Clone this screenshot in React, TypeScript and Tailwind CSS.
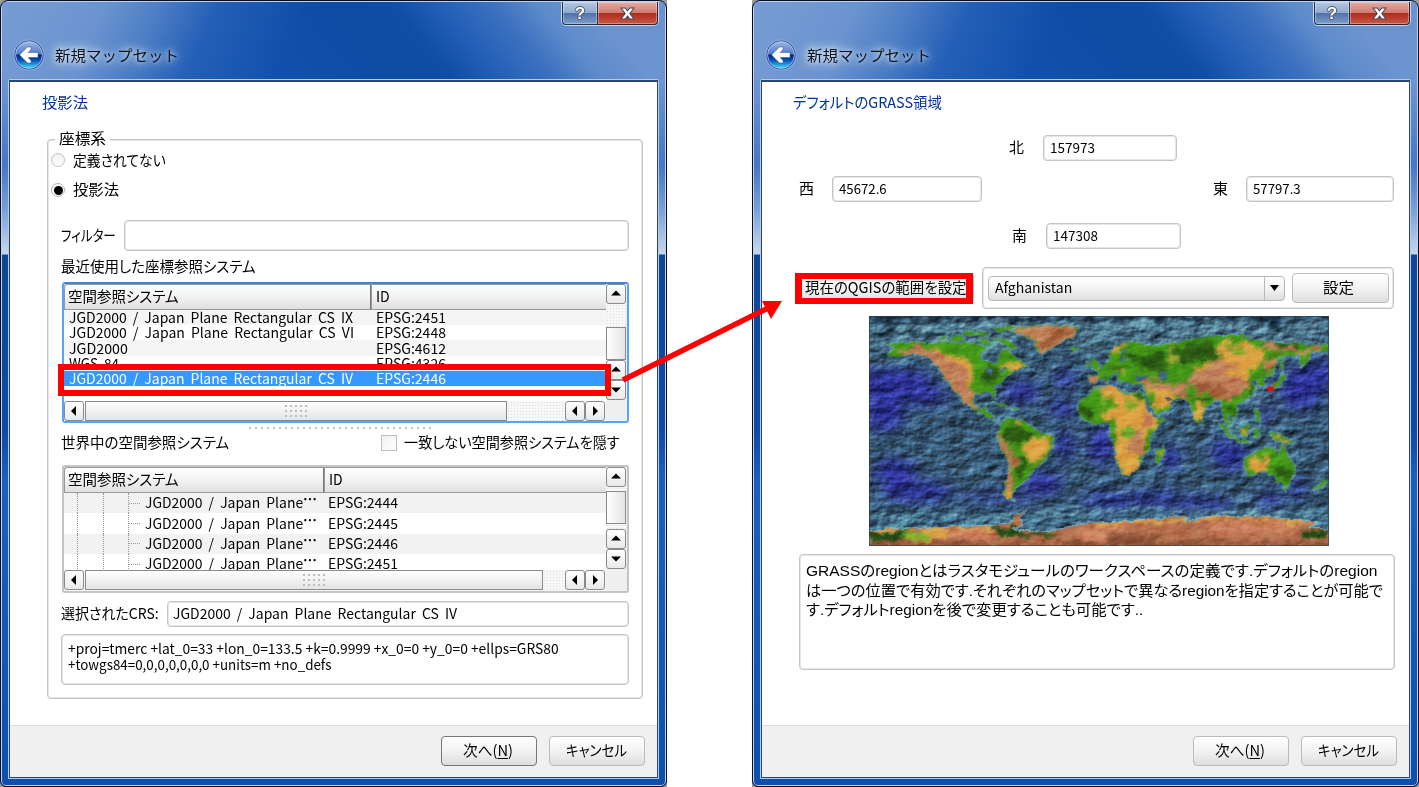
import { useLayoutEffect, useRef, type ReactNode } from "react";
import clsx from "clsx";

/* Single line of text stretched to the width given by its className. */
function Fit({ className, children }: { className: string; children: ReactNode }) {
  const outer = useRef<HTMLSpanElement>(null);
  const inner = useRef<HTMLSpanElement>(null);
  useLayoutEffect(() => {
    if (outer.current && inner.current) {
      inner.current.style.transform = `scaleX(${outer.current.clientWidth / inner.current.offsetWidth})`;
    }
  });
  return (
    <span ref={outer} className={clsx("block h-5 shrink-0 whitespace-nowrap leading-[18px]", className)}>
      <span ref={inner} className="inline-block origin-left">{children}</span>
    </span>
  );
}

type Dir = "up" | "down" | "left" | "right";
const arrows: Record<Dir, string> = {
  up: "M1 7.5 L6 2.5 L11 7.5Z",
  down: "M1 3.5 L6 8.5 L11 3.5Z",
  left: "M8 1 L3 6 L8 11Z",
  right: "M4 1 L9 6 L4 11Z",
};

function ArrowButton({ dir }: { dir: Dir }) {
  return (
    <div className="flex h-5 w-5 shrink-0 items-center justify-center rounded-[3px] border border-[#8a8a8a] bg-gradient-to-b from-white to-[#e9e9e9]">
      <svg width="12" height="12" viewBox="0 0 12 12"><path d={arrows[dir]} /></svg>
    </div>
  );
}

const track = "bg-[#f7f7f7] bg-[radial-gradient(#dedede_0.6px,transparent_0.8px)] bg-[size:3px_3px]";

function Grip() {
  return (
    <div className="grid grid-cols-5 gap-x-[3px] gap-y-[3px]">
      {Array.from({ length: 15 }, (_, i) => (
        <i key={i} className="h-[2px] w-[2px] bg-[#bdbdbd]" />
      ))}
    </div>
  );
}

function HScroll({ thumb, height }: { thumb: string; height: string }) {
  return (
    <div className={clsx("flex w-full shrink-0 bg-[#f7f7f7] pr-px", height)}>
      <ArrowButton dir="left" />
      <div className={clsx("ml-px flex h-5 items-center justify-center border border-[#8a8a8a] bg-gradient-to-b from-white to-[#e4e4e4]", thumb)}>
        <Grip />
      </div>
      <div className={clsx("h-5 flex-1", track)} />
      <ArrowButton dir="left" />
      <ArrowButton dir="right" />
    </div>
  );
}

function VScroll({ before, thumb, after }: { before: string; thumb: string; after: string }) {
  return (
    <div className="flex w-[21px] shrink-0 flex-col bg-[#efefef] pr-px">
      <ArrowButton dir="up" />
      <div className={clsx(track, before)} />
      <div className={clsx("border border-[#8a8a8a] bg-gradient-to-r from-white to-[#e4e4e4]", thumb)} />
      <div className={clsx(track, after)} />
      <ArrowButton dir="up" />
      <ArrowButton dir="down" />
    </div>
  );
}

function Header({ first }: { first: string }) {
  return (
    <div className="flex h-[26px] shrink-0 text-[15px]">
      <div className={clsx("flex items-center rounded-tl-[3px] border border-[#999] border-r-[#777] bg-gradient-to-b from-white via-[#f2f2f2] to-[#e0e0e0] pl-[3px]", first)}>
        <Fit className="w-[111px] [font-feature-settings:'palt']">空間参照システム</Fit>
      </div>
      <div className="flex flex-1 items-center border border-r-0 border-[#999] bg-gradient-to-b from-white via-[#f2f2f2] to-[#e0e0e0] pl-[4px]">
        <Fit className="w-[14px]">ID</Fit>
      </div>
    </div>
  );
}

const recent = [
  { name: "JGD2000 / Japan Plane Rectangular CS IX", w: "w-[284px]", id: "EPSG:2451", row: "h-[15px] bg-[#f5f5f5]" },
  { name: "JGD2000 / Japan Plane Rectangular CS VI", w: "w-[285px]", id: "EPSG:2448", row: "h-[15px]" },
  { name: "JGD2000", w: "w-[59px]", id: "EPSG:4612", row: "h-[16px] bg-[#f5f5f5]" },
  { name: "WGS 84", w: "w-[50px]", id: "EPSG:4326", row: "h-[15px]" },
  { name: "JGD2000 / Japan Plane Rectangular CS IV", w: "w-[284px]", id: "EPSG:2446", row: "h-[15px] bg-[#3399ff] text-white" },
];

function RecentTable() {
  return (
    <div className="mt-[5px] flex h-[141px] w-[567px] rounded-[3px] border-2 border-[#55a5fb] border-t-[#3d86d6]">
      <div className="flex w-[542px] flex-col">
        <Header first="w-[307px]" />
        <div className="h-[91px] shrink-0 overflow-hidden text-[14px]">
          {recent.map((r) => (
            <div key={r.name} className={clsx("flex items-center pl-[5px]", r.row)}>
              <div className="w-[307px]"><Fit className={clsx("!h-[15px] !leading-[14px] [word-spacing:3px]", r.w)}>{r.name}</Fit></div>
              <Fit className="!h-[15px] w-[70px] !leading-[14px]">{r.id}</Fit>
            </div>
          ))}
        </div>
        <HScroll thumb="w-[422px]" height="h-[20px]" />
      </div>
      <VScroll before="h-[23px]" thumb="h-[33px]" after="h-0" />
    </div>
  );
}

const world = ["EPSG:2444", "EPSG:2445", "EPSG:2446", "EPSG:2451"];

function WorldTable() {
  return (
    <div className="mt-[12px] flex h-[128px] w-[567px] rounded-[3px] border-2 border-[#c4c4c4]">
      <div className="flex w-[542px] flex-col">
        <Header first="w-[260px]" />
        <div className="h-[77px] shrink-0 overflow-hidden text-[14px]">
          {world.map((id, i) => (
            <div key={id} className={clsx("flex h-[20.4px] items-center", i % 2 === 0 && "bg-[#f2f2f2]")}>
              <div className="ml-[13px] h-full w-[26px] border-l border-dotted border-[#999]" />
              <div className="h-full w-[25px] border-l border-dotted border-[#999]" />
              <div className="flex h-full w-[12px] items-center border-l border-dotted border-[#999]">
                <div className="w-full border-t border-dotted border-[#999]" />
              </div>
              <div className="ml-[5px] w-[183px]">
                <Fit className="w-[172px] !leading-[18px] [word-spacing:3px]">JGD2000 / Japan Plane<span className="inline-block -translate-y-[4px] font-bold">…</span></Fit>
              </div>
              <Fit className="w-[70px] !leading-[18px]">{id}</Fit>
            </div>
          ))}
        </div>
        <HScroll thumb="w-[458px]" height="h-[21px]" />
      </div>
      <VScroll before="h-[4px]" thumb="h-[33px]" after="h-[5px]" />
    </div>
  );
}

const box = "border border-[#c4c4c4] shadow-[inset_0_0_0_1px_#e6e6e6] rounded-[4px] bg-white";
const buttonBase = "flex items-center justify-center rounded-[4px] border bg-gradient-to-b from-white via-[#f3f3f3] to-[#dedede]";

function BackButton() {
  return (
    <svg width="32" height="32" viewBox="0 0 32 32" className="shrink-0">
      <defs>
        <linearGradient id="orb" x1="0" y1="0" x2="0" y2="1">
          <stop offset="0" stopColor="#9fb8e2" />
          <stop offset="0.46" stopColor="#4f7cc8" />
          <stop offset="0.5" stopColor="#06207c" />
          <stop offset="0.7" stopColor="#0a55b8" />
          <stop offset="1" stopColor="#38e0ff" />
        </linearGradient>
      </defs>
      <circle cx="16" cy="16" r="15.6" fill="#8fb0e0" />
      <circle cx="16" cy="16" r="14.6" fill="#2d4f90" />
      <circle cx="16" cy="16" r="13.4" fill="url(#orb)" stroke="#b7cdee" strokeWidth="0.8" />
      <path d="M6.5 16 L14.5 8 L18 8 L18 10.4 L15.2 13.4 L25 13.4 L25 18.6 L15.2 18.6 L18 21.6 L18 24 L14.5 24Z" fill="#fff" stroke="#274f93" strokeWidth="0.5" />
    </svg>
  );
}

function Wizard({ children, primary }: { children: ReactNode; primary?: boolean }) {
  return (
    <div className="bg-[#9a9a98]">
      <div className="h-[787px] w-[667px] overflow-hidden rounded-t-[8px] rounded-b-[6px] border border-[#050d24] bg-[linear-gradient(180deg,#7093cb_0px,#6f95d0_80px,#4577c4_165px,#7da1d8_210px,#c8d8ec_253px,#0e4797_254px,#0d4ba6_430px,#1c5fc0_480px,#0d4fae_787px)] shadow-[inset_0_0_0_1px_#bcd2ee]">
        <div className="mx-px mt-px flex h-[77px] bg-[linear-gradient(115deg,#779cd4_0%,#6b94cf_15%,rgba(85,133,200,0.85)_23%,rgba(50,104,188,0.6)_31%,rgba(17,80,174,0)_44%),linear-gradient(50deg,#1755b4_0%,#1151ae_35%,#0d4ca4_56%,#0f4da6_62%,#2560b7_69%,#3c71bf_76%,#5c8aca_82%,#6c94ce_89%,#6a92cc_100%)]">
          <div className="flex pl-[11px] pt-[37px]">
            <BackButton />
            <div className="ml-[10px] mt-[7px] text-[15px] text-[#0a1420] [text-shadow:0_0_5px_#ffffffcc,0_0_10px_#ffffffcc,0_0_14px_#ffffffaa]">
              <Fit className="w-[124px]">新規マップセット</Fit>
            </div>
          </div>
          <div className="ml-auto mr-[6px] flex h-[24px] rounded-b-[5px] border border-t-0 border-[#c3d6ee]">
            <div className="flex w-[36px] items-center justify-center rounded-bl-[4px] border border-t-0 border-[#24324c] bg-[linear-gradient(180deg,#b7c8e0_0%,#8fa9d0_48%,#4e71a8_50%,#7c9dcb_100%)] shadow-[inset_0_0_0_1px_#ffffff55]">
              <span className="font-['Liberation_Sans'] text-[17px] font-bold leading-none text-white [text-shadow:1px_0_0_#46546e,-1px_0_0_#46546e,0_1px_0_#46546e,0_-1px_0_#46546e]">?</span>
            </div>
            <div className="flex w-[60px] items-center justify-center rounded-br-[4px] border border-l-0 border-t-0 border-[#461a22] bg-[linear-gradient(180deg,#e2ada3_0%,#cf7d72_48%,#af2a1a_50%,#c8584a_100%)] shadow-[inset_0_0_0_1px_#ffffff55]">
              <svg width="15" height="13" viewBox="0 0 15 13"><path d="M1 1h4.2l2.3 2.8L9.8 1H14L9.8 6.5 14 12H9.8L7.5 9.2 5.2 12H1l4.2-5.5z" fill="#fff" stroke="#444a5c" strokeWidth="1.1" /></svg>
            </div>
          </div>
        </div>
        <div className="ml-[7px] h-[700px] w-[651px] rounded-t-[2px] border border-[#b4cbea]">
          <div className="flex h-full flex-col border border-t-2 border-[#2b466f] bg-white">
            <div className="h-[643px]">{children}</div>
            <div className="flex min-h-0 flex-1 justify-end gap-[12px] border-t border-[#dcdcdc] bg-[#f0f0f0] pr-[12px] pt-[10px] text-[15px]">
              <div className={clsx(buttonBase, "h-[30px] w-[96px] pr-[3px]", primary ? "border-[#777]" : "border-[#bcbcbc]")}>
                <Fit className="w-[50px]">次へ(<span className="underline underline-offset-2">N</span>)</Fit>
              </div>
              <div className={clsx(buttonBase, "h-[30px] w-[96px] border-[#bcbcbc] pr-[2px]")}>
                <Fit className="w-[61px] [font-feature-settings:'palt']">キャンセル</Fit>
              </div>
            </div>
          </div>
        </div>
      </div>
    </div>
  );
}

function Projection() {
  return (
    <div className="flex flex-col pl-[37px] pt-[11px] text-[15px]">
      <Fit className="-ml-[5px] w-[46px] text-[#003399]">投影法</Fit>
      <div className="relative mt-[26px] h-[560px] w-[596px] rounded-[4px] border border-[#c4c4c4] pl-px pt-[10px] shadow-[inset_0_0_0_1px_#e6e6e6]">
        <span className="absolute -top-[11px] left-[7px] bg-white px-[4px]"><Fit className="w-[47px]">座標系</Fit></span>
        <div className="flex items-center gap-[8px] pl-[2px]">
          <div className="h-[14px] w-[14px] rounded-full border border-[#c0c0c0] bg-gradient-to-b from-[#f0f0f0] to-white" />
          <Fit className="w-[93px] !leading-[20px] [font-feature-settings:'palt']">定義されてない</Fit>
        </div>
        <div className="mt-[10px] flex items-center gap-[8px] pl-[2px]">
          <div className="flex h-[14px] w-[14px] items-center justify-center rounded-full border border-[#b0b0b0] bg-white"><i className="h-[9px] w-[9px] rounded-full bg-black" /></div>
          <Fit className="w-[46px]">投影法</Fit>
        </div>
        <div className="flex flex-col pl-[12px]">
          <div className="mt-[20px] flex h-[31px] items-center gap-[8px]">
            <Fit className="w-[55px] [font-feature-settings:'palt']">フィルター</Fit>
            <div className={clsx(box, "h-[31px] w-[505px]")} />
          </div>
          <Fit className="mt-[6px] w-[195px] [font-feature-settings:'palt']">最近使用した座標参照システム</Fit>
          <div className="pl-px"><RecentTable /></div>
          <div className="ml-[188px] mt-[3px] flex h-[3px] items-center gap-[4px]">
            {Array.from({ length: 31 }, (_, i) => <i key={i} className="h-[2px] w-[2px] bg-[#c4c4c4]" />)}
          </div>
          <div className="mt-[4px] flex h-[20px] items-center">
            <Fit className="w-[168px] [font-feature-settings:'palt']">世界中の空間参照システム</Fit>
            <div className="ml-[152px] h-[16px] w-[16px] border border-[#bdbdbd] bg-gradient-to-br from-[#f1f1f1] to-white" />
            <Fit className="ml-[7px] w-[216px] [font-feature-settings:'palt']">一致しない空間参照システムを隠す</Fit>
          </div>
          <div className="pl-px"><WorldTable /></div>
          <div className="mt-[8px] flex h-[26px] items-center gap-[8px]">
            <Fit className="w-[98px] [font-feature-settings:'palt']">選択されたCRS:</Fit>
            <div className={clsx(box, "flex h-[26px] w-[462px] items-center pl-[5px] text-[14px]")}>
              <Fit className="w-[284px] [word-spacing:3px]">JGD2000 / Japan Plane Rectangular CS IV</Fit>
            </div>
          </div>
          <div className={clsx(box, "mt-[7px] h-[51px] w-[568px] pl-[6px] pt-[4px] text-[14px]")}>
            <Fit className="!h-4 w-[491px]">+proj=tmerc +lat_0=33 +lon_0=133.5 +k=0.9999 +x_0=0 +y_0=0 +ellps=GRS80</Fit>
            <Fit className="!h-4 w-[263px]">+towgs84=0,0,0,0,0,0,0 +units=m +no_defs</Fit>
          </div>
        </div>
      </div>
    </div>
  );
}

const landPaths = [
  "M65 95 110 92 180 95 235 88 290 92 340 95 365 108 345 128 348 145 375 155 398 150 405 125 420 112 445 130 470 150 488 160 455 175 430 185 415 205 385 225 393 258 375 240 335 245 328 270 343 290 366 280 362 296 381 305 387 322 410 328 395 328 375 315 340 298 320 290 300 270 275 245 255 215 235 195 230 175 195 140 150 125 95 135 68 125 90 110Z",
  "M225 72 245 74 235 84ZM258 74 295 72 300 86 262 86ZM290 60 320 56 335 66 310 70ZM335 60 375 66 370 76 340 72ZM345 78 370 85 380 100 350 94ZM385 50 440 40 450 44 410 60ZM385 80 420 82 460 105 440 110 415 95ZM330 100 350 100 345 112Z",
  "M438 56 490 42 580 40 645 46 622 75 590 90 560 105 535 127 515 112 505 85 470 66Z",
  "M615 108 640 104 648 109 630 114Z",
  "M408 330 430 318 470 325 505 345 530 362 565 375 568 392 550 430 530 452 500 485 482 505 460 520 442 540 436 558 452 568 425 560 418 540 428 500 432 450 410 410 398 375Z",
  "M380 272 410 272 432 284 410 280ZM438 286 458 290 445 294Z",
  "M670 190 700 192 706 182 690 172 715 165 725 152 745 135 728 130 750 105 790 88 820 92 850 100 880 100 930 95 980 82 1040 75 1090 70 1130 68 1170 85 1210 90 1290 95 1340 100 1393 95 1393 115 1345 118 1325 150 1308 165 1312 132 1280 130 1245 130 1232 165 1222 185 1198 198 1200 220 1186 222 1180 202 1158 208 1172 230 1162 252 1130 270 1112 275 1120 300 1102 318 1086 300 1088 325 1102 348 1080 330 1068 268 1045 262 1020 295 1004 335 992 320 978 275 955 262 925 260 918 285 880 308 866 296 845 250 838 220 800 212 762 206 756 190 770 175 738 190 728 212 718 196 705 205 690 216 672 212Z",
  "M678 138 692 140 702 160 696 170 684 168ZM664 152 674 152 672 164 664 164Z",
  "M670 250 692 226 740 220 760 234 792 245 830 240 842 260 855 300 870 318 900 318 880 345 855 372 856 410 830 440 820 470 790 490 775 485 755 440 750 410 738 370 735 338 700 332 690 340 655 320 640 290 645 265Z",
  "M874 416 896 400 898 420 886 456 870 450Z",
  "M1140 440 1180 415 1195 405 1228 405 1232 418 1245 425 1255 392 1268 432 1288 460 1284 500 1265 520 1240 512 1232 490 1200 478 1170 485 1148 492 1138 460Z",
  "M1258 524 1274 524 1266 536ZM1376 503 1390 506 1362 534 1348 534Z",
  "M1122 355 1152 335 1158 350 1148 370 1128 366ZM1064 334 1078 340 1108 376 1098 378ZM1108 380 1155 388 1150 394 1110 386ZM1166 355 1186 352 1180 376 1168 374ZM1210 360 1240 366 1292 396 1262 392 1235 384ZM1168 290 1178 292 1186 330 1176 326ZM1252 185 1264 190 1248 220 1216 226 1240 210ZM1246 140 1256 144 1254 175 1246 170ZM1010 325 1016 330 1010 336Z",
];

const antarctica = "M13 655 130 650 250 645 380 642 438 634 452 610 482 598 464 616 468 642 430 656 560 660 600 652 640 640 700 632 770 630 840 625 920 618 968 616 960 635 1010 618 1070 612 1140 612 1210 615 1280 625 1352 630 1328 650 1393 655 1393 702 13 702Z";

function WorldMap() {
  return (
    <svg width="460" height="230" viewBox="13 12 1380 690" preserveAspectRatio="none" className="block">
      <defs>
        <filter id="relief" x="0" y="0" width="100%" height="100%" colorInterpolationFilters="sRGB">
          <feTurbulence type="fractalNoise" baseFrequency="0.018 0.03" numOctaves="4" seed="21" result="n" />
          <feDiffuseLighting in="n" surfaceScale="5" diffuseConstant="1" lightingColor="#ffffff"><feDistantLight azimuth="225" elevation="29" /></feDiffuseLighting>
        </filter>
        <filter id="coast" x="-2%" y="-2%" width="104%" height="104%" colorInterpolationFilters="sRGB">
          <feTurbulence type="fractalNoise" baseFrequency="0.05" numOctaves="3" seed="3" result="n" />
          <feDisplacementMap in="SourceGraphic" in2="n" scale="18" xChannelSelector="R" yChannelSelector="G" />
        </filter>
        <filter id="soft" x="-30%" y="-30%" width="160%" height="160%" colorInterpolationFilters="sRGB"><feGaussianBlur stdDeviation="20" /></filter>
        <filter id="patch" x="-5%" y="-5%" width="110%" height="110%" colorInterpolationFilters="sRGB">
          <feTurbulence type="fractalNoise" baseFrequency="0.03" numOctaves="3" seed="5" result="n" />
          <feDisplacementMap in="SourceGraphic" in2="n" scale="45" xChannelSelector="R" yChannelSelector="G" result="d" />
          <feGaussianBlur in="d" stdDeviation="4" />
        </filter>
        <clipPath id="land">{landPaths.map((d) => <path key={d} d={d} />)}</clipPath>
        <clipPath id="ice"><path d={antarctica} /></clipPath>
      </defs>
      <rect x="13" y="12" width="1380" height="690" fill="#375874" />
      <g filter="url(#soft)" fill="#2d3298">
        <ellipse cx="80" cy="210" rx="120" ry="45" /><ellipse cx="60" cy="300" rx="60" ry="60" />
        <ellipse cx="180" cy="250" rx="70" ry="30" /><ellipse cx="90" cy="480" rx="65" ry="40" />
        <ellipse cx="160" cy="540" rx="110" ry="30" /><ellipse cx="470" cy="240" rx="55" ry="32" />
        <ellipse cx="590" cy="290" rx="45" ry="25" /><ellipse cx="600" cy="200" rx="35" ry="25" />
        <ellipse cx="600" cy="400" rx="28" ry="45" /><ellipse cx="535" cy="515" rx="60" ry="35" />
        <ellipse cx="710" cy="400" rx="38" ry="60" /><ellipse cx="725" cy="570" rx="80" ry="28" />
        <ellipse cx="860" cy="560" rx="80" ry="22" /><ellipse cx="1010" cy="580" rx="110" ry="22" />
        <ellipse cx="920" cy="440" rx="30" ry="40" /><ellipse cx="1095" cy="420" rx="55" ry="55" />
        <ellipse cx="1200" cy="290" rx="28" ry="38" /><ellipse cx="1310" cy="230" rx="65" ry="65" />
        <ellipse cx="1370" cy="190" rx="40" ry="50" /><ellipse cx="1210" cy="570" rx="40" ry="25" />
        <ellipse cx="1300" cy="530" rx="20" ry="35" /><ellipse cx="400" cy="560" rx="120" ry="25" opacity="0.5" />
      </g>
      <g filter="url(#soft)">
        <rect x="13" y="12" width="1380" height="75" fill="#507a90" />
        <rect x="640" y="70" width="730" height="45" fill="#486e84" />
        <rect x="13" y="605" width="1380" height="45" fill="#4a7a94" />
        <rect x="13" y="95" width="150" height="55" fill="#486e88" />
        <ellipse cx="385" cy="130" rx="45" ry="35" fill="#4c7890" /><ellipse cx="1190" cy="260" rx="35" ry="40" fill="#4a7088" />
        <ellipse cx="1120" cy="350" rx="55" ry="40" fill="#4a7a90" /><ellipse cx="1240" cy="405" rx="50" ry="25" fill="#4a748a" />
      </g>
      <g filter="url(#patch)" fill="none" stroke="#6fa9bb" strokeWidth="5" opacity="0.6">
        <path d="M590 130 570 190 530 250 535 310 600 345 650 370 655 440 640 520 680 570 760 545 870 500 960 460M960 460 930 370 880 300M960 460 1010 510 1110 560 1260 600" strokeWidth="10" opacity="0.45" />
        <path d="M100 410 180 440 260 455 400 490M320 330 280 400 275 520M40 140 100 152 170 128 210 165M385 445 430 405M980 280 978 390M1048 280 1040 480M1215 230 1250 270 1230 330M1290 410 1330 470 1370 500M490 170 520 200 570 160" />
        <path d="M20 610 200 600 420 612 600 600 800 590 1000 600 1390 605M20 60 140 75 200 50 300 30 430 25M700 40 900 35 1100 50 1200 45" strokeWidth="8" />
      </g>
      <g filter="url(#patch)" fill="#0b1d30" opacity="0.8"><path d="M13 12H1393V24H1250L1220 35 1180 24H13ZM40 30 100 34 140 44 80 50ZM20 58 70 52 120 66 60 72ZM130 60 180 65 150 74ZM1190 18 1250 24 1240 60 1205 40Z" /></g>
      <rect x="13" y="12" width="1380" height="690" filter="url(#relief)" className="mix-blend-overlay" opacity="0.9" />
      <g filter="url(#coast)">
        <g fill="none" stroke="#74aebc" strokeWidth="9" opacity="0.5" strokeLinejoin="round">{landPaths.map((d) => <path key={d} d={d} />)}</g>
        <g fill="#459918">{landPaths.map((d) => <path key={d} d={d} />)}</g>
        <g clipPath="url(#land)">
          <g filter="url(#patch)">
            <g fill="#2c5c14">
              <path d="M415 355 450 345 500 360 505 378 460 392 415 380ZM465 430 490 440 490 470 460 500 452 480ZM940 100 1040 85 1070 110 1050 145 960 152 935 130ZM780 130 880 120 920 150 890 185 820 160ZM720 160 800 165 770 185ZM960 240 1020 255 1050 268 1010 270ZM1145 205 1170 215 1160 250 1140 245ZM1090 280 1120 295 1105 315ZM350 175 420 165 400 200 360 215ZM1180 90 1300 92 1300 110 1200 108ZM640 280 690 290 690 335 650 320ZM1230 465 1280 480 1270 510 1235 495ZM800 240 840 240 835 262ZM850 370 835 425 820 400Z" />
            </g>
            <g fill="#dca243">
              <path d="M210 100 260 130 320 140 325 220 300 280 260 240 225 170ZM395 160 480 150 470 175 420 172ZM490 380 560 378 550 430 510 460 485 430ZM445 328 475 335 465 350 445 345ZM420 510 445 490 440 560 420 560ZM690 225 760 222 800 250 845 270 880 320 870 340 840 400 810 490 770 490 750 400 745 330 700 300 760 280 720 250ZM850 220 910 230 930 270 880 305ZM990 270 1020 270 1010 325 990 310ZM1050 95 1130 90 1190 110 1200 140 1150 185 1140 230 1080 240 1040 170 1000 195 980 170 1080 140ZM1150 440 1200 430 1220 460 1200 475 1150 480ZM730 110 790 90 770 120ZM740 175 790 180 780 195ZM1130 345 1155 340 1145 366ZM1205 360 1290 395 1260 392ZM926 105 935 105 930 155 922 150ZM874 416 896 400 886 440Z" />
            </g>
            <g fill="#c0805a">
              <path d="M90 112 180 96 240 130 305 175 322 240 350 300 315 295 230 195 190 142 130 130ZM425 50 645 40 610 80 535 130 500 85ZM400 335 412 380 440 415 460 430 450 480 436 540 420 540 426 440 396 385ZM820 200 860 196 900 215 960 220 975 255 930 255 900 235 830 215ZM960 205 1010 175 1060 145 1120 155 1115 175 1070 185 1140 200 1130 250 1080 270 1060 255 1000 240ZM835 295 870 310 855 350 840 340ZM790 370 815 350 840 370 830 440 790 410ZM1190 90 1290 110 1380 98 1380 112 1280 125 1190 110ZM1200 145 1230 140 1220 175 1200 170ZM662 190 702 195 695 212 672 212ZM700 225 740 220 720 240Z" />
            </g>
            <g fill="#98542f" opacity="0.85"><path d="M980 210 1060 215 1095 235 1085 250 1010 242ZM440 420 456 430 448 470 436 465ZM515 90 590 50 620 50 560 100 535 115Z" /></g>
            <g fill="#6fae28"><path d="M770 340 805 345 800 370 770 370ZM1070 105 1130 108 1170 120 1090 125ZM330 120 345 160 380 165 350 175ZM700 245 730 260 710 280ZM780 260 830 280 800 290Z" /></g>
          </g>
        </g>
        <g fill="#41708c"><path d="M810 192 850 192 850 202 815 204ZM882 182 904 178 906 192 896 210 886 200ZM776 108 786 112 772 140 796 138 790 146 765 146ZM838 248 846 250 872 310 866 312ZM355 172 375 168 390 180 378 186ZM395 176 425 170 424 178ZM902 252 922 262 912 268Z" /></g>
        <path d={antarctica} fill="none" stroke="#8cc4cc" strokeWidth="8" opacity="0.7" />
        <path d={antarctica} fill="#b5704f" />
        <g clipPath="url(#ice)">
          <g filter="url(#patch)">
            <path d="M170 640 260 645 380 640 390 665 250 672 170 690ZM13 645H140V658H13ZM680 628 930 615 1080 606 1340 625 1340 635 1080 618 900 630 700 640Z" fill="#dca44d" />
            <path d="M13 662 130 656 160 672 120 688 13 688ZM380 652 470 644 480 662 590 658 570 676 420 676ZM1310 656 1393 655 1393 682 1320 678Z" fill="#1f4c14" />
            <path d="M110 660 200 658 190 680 120 684Z" fill="#83ad2d" />
            <path d="M250 655 370 650 380 680 250 690ZM650 645 780 640 790 680 650 680ZM1040 632 1280 635 1280 665 1040 665Z" fill="#cd8261" />
            <path d="M13 690H1393V702H13ZM720 660 900 670 860 690 720 690Z" fill="#8e5439" />
          </g>
        </g>
      </g>
      <rect x="13" y="12" width="1380" height="690" filter="url(#relief)" className="mix-blend-overlay" opacity="0.4" />
      <rect x="1209" y="224" width="17" height="12" fill="#ff0000" />
      <rect x="14.5" y="13.5" width="1377" height="687" fill="none" stroke="#27364a" strokeWidth="3" opacity="0.55" />
    </svg>
  );
}

function Coord({ label, value, gap, field, text }: { label: string; value: string; gap: string; field: string; text: string }) {
  return (
    <div className={clsx("flex h-[26px] items-center", gap)}>
      <Fit className="w-[15px] text-[15px]">{label}</Fit>
      <div className={clsx(box, "flex h-[26px] items-center pl-[6px] text-[13.5px]", field)}>
        <Fit className={text}>{value}</Fit>
      </div>
    </div>
  );
}

function Region() {
  return (
    <div className="flex flex-col pl-[37px] pt-[11px] text-[15px]">
      <Fit className="-ml-[6px] w-[149px] text-[#003399] [font-feature-settings:'palt']">デフォルトのGRASS領域</Fit>
      <div className="ml-[210px] mt-[22px]"><Coord label="北" value="157973" gap="gap-[19px]" field="w-[134px]" text="w-[45px]" /></div>
      <div className="mt-[15px] flex w-[595px] justify-between">
        <Coord label="西" value="45672.6" gap="gap-[18px]" field="w-[150px]" text="w-[48px]" />
        <Coord label="東" value="57797.3" gap="gap-[18px]" field="w-[148px]" text="w-[48px]" />
      </div>
      <div className="ml-[213px] mt-[21px]"><Coord label="南" value="147308" gap="gap-[19px]" field="w-[135px]" text="w-[45px]" /></div>
      <div className="mt-[18px] flex h-[42px] items-center">
        <div className={clsx(buttonBase, "-ml-[3px] h-[30px] w-[178px] border-[#bcbcbc] pl-px")}>
          <Fit className="w-[162px] [font-feature-settings:'palt']">現在のQGISの範囲を設定</Fit>
        </div>
        <div className={clsx(box, "ml-[8px] flex h-[42px] w-[412px] items-center justify-between pl-[5px] pr-[4px]")}>
          <div className={clsx(buttonBase, "h-[25px] w-[297px] !justify-between border-[#b8b8b8] text-[13.5px]")}>
            <Fit className="ml-[6px] w-[77px]">Afghanistan</Fit>
            <div className="flex h-full w-[20px] items-center justify-center border-l border-[#b8b8b8]">
              <svg width="9" height="6" viewBox="0 0 9 6"><path d="M0 0H9L4.5 6Z" /></svg>
            </div>
          </div>
          <div className={clsx(buttonBase, "h-[30px] w-[97px] border-[#bcbcbc] pr-[4px]")}><Fit className="w-[31px]">設定</Fit></div>
        </div>
      </div>
      <div className="ml-[70px] mt-[7px]"><WorldMap /></div>
      <div className={clsx(box, "mt-[8px] h-[116px] w-[596px] pl-[6px] pt-[7px] font-['Liberation_Sans','Noto_Sans_CJK_JP',sans-serif] [font-feature-settings:'palt']")}>
        <Fit className="w-[571px]">GRASSのregionとはラスタモジュールのワークスペースの定義です.デフォルトのregion</Fit>
        <Fit className="!h-[19px] w-[577px]">は一つの位置で有効です.それぞれのマップセットで異なるregionを指定することが可能で</Fit>
        <Fit className="w-[337px]">す.デフォルトregionを後で変更することも可能です..</Fit>
      </div>
    </div>
  );
}

export default function App() {
  return (
    <div className="relative flex h-[787px] w-[1419px] justify-between overflow-hidden bg-white font-['Noto_Sans_CJK_JP',sans-serif] text-black">
      <Wizard primary><Projection /></Wizard>
      <Wizard><Region /></Wizard>
      <div className="absolute left-[58px] top-[364px] h-[32px] w-[553px] border-[6px] border-[#ff0000]" />
      <div className="absolute left-[795px] top-[273px] h-[31px] w-[178px] border-x-[7px] border-y-[6px] border-[#ff0000]" />
      <svg className="absolute left-[610px] top-[290px]" width="180" height="100" viewBox="610 290 180 100">
        <path d="M623 380 770 307" stroke="#ff0000" strokeWidth="5.5" fill="none" />
        <path d="M782 301 762 301 771 319Z" fill="#ff0000" />
      </svg>
    </div>
  );
}
